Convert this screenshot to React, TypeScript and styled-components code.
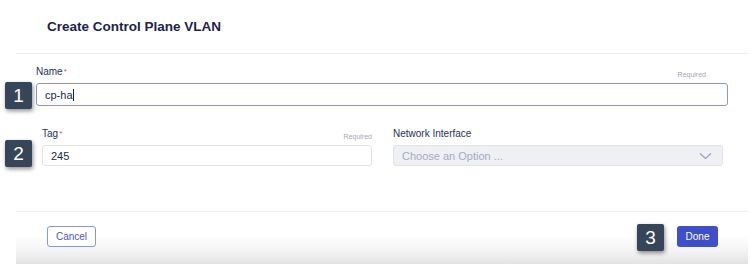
import styled, { createGlobalStyle } from "styled-components";

const GlobalStyle = createGlobalStyle`
  body {
    margin: 0;
    background: #ffffff;
    font-family: "Liberation Sans", Arial, sans-serif;
  }
`;

function App() {
  return (
    <>
      <GlobalStyle />
      <Page>
        <Modal>
          <Header>
            <Title>Create Control Plane VLAN</Title>
          </Header>
          <Body>
            <Field $padLeft={20} $padRight={20}>
              <LabelRow>
                <Label>
                  Name<Star>*</Star>
                </Label>
                <Hint $offset={22}>Required</Hint>
              </LabelRow>
              <Input $focused>
                cp-ha<Caret />
              </Input>
              <Badge $left={-11} $top={-2}>1</Badge>
            </Field>
            <Row>
              <Field>
                <LabelRow>
                  <Label>
                    Tag<Star>*</Star>
                  </Label>
                  <Hint>Required</Hint>
                </LabelRow>
                <Input>245</Input>
                <Badge $left={-37} $top={-6}>2</Badge>
              </Field>
              <Field>
                <LabelRow>
                  <Label>Network Interface</Label>
                </LabelRow>
                <Select>
                  <Placeholder>Choose an Option ...</Placeholder>
                  <svg width="13" height="8" viewBox="0 0 13 8" fill="none">
                    <path d="M1 1.5L6.5 6.5L12 1.5" stroke="#9a9eb4" strokeWidth="1.2" />
                  </svg>
                </Select>
              </Field>
            </Row>
          </Body>
          <Footer>
            <GhostButton>Cancel</GhostButton>
            <Actions>
              <Badge $static>3</Badge>
              <PrimaryButton>Done</PrimaryButton>
            </Actions>
          </Footer>
        </Modal>
      </Page>
    </>
  );
}

const Page = styled.div`
  width: 750px;
  height: 264px;
  overflow: hidden;
  padding-left: 16px;
  box-sizing: border-box;
`;

const Modal = styled.div`
  width: 732px;
  height: 264px;
  display: flex;
  flex-direction: column;
  background: #ffffff;
  border-bottom-right-radius: 6px;
`;

const Header = styled.div`
  height: 53px;
  display: flex;
  align-items: center;
  padding-left: 31px;
  border-bottom: 1px solid #ececf4;
`;

const Title = styled.h1`
  margin: 0;
  font-size: 13.5px;
  font-weight: 700;
  color: #1b1f4f;
`;

const Body = styled.div`
  height: 157px;
  padding-top: 12px;
  box-sizing: border-box;
  display: flex;
  flex-direction: column;
  gap: 22px;
`;

const Row = styled.div`
  display: grid;
  grid-template-columns: 330px 330px;
  column-gap: 21px;
  padding-left: 26px;
`;

const Field = styled.div<{ $padLeft?: number; $padRight?: number }>`
  position: relative;
  display: flex;
  flex-direction: column;
  padding-left: ${(p) => p.$padLeft ?? 0}px;
  padding-right: ${(p) => p.$padRight ?? 0}px;
`;

const LabelRow = styled.div`
  height: 18px;
  display: flex;
  justify-content: space-between;
  align-items: flex-start;
  margin-bottom: -1px;
`;

const Label = styled.span`
  font-size: 10px;
  color: #2a2f5a;
  line-height: 12px;
`;

const Star = styled.span`
  color: #e0464c;
  font-size: 8px;
  vertical-align: top;
  margin-left: 1px;
`;

const Hint = styled.span<{ $offset?: number }>`
  font-size: 7px;
  line-height: 8px;
  color: #a3a7ba;
  margin-top: 5px;
  padding-right: ${(p) => p.$offset ?? 0}px;
`;

const Input = styled.div<{ $focused?: boolean }>`
  box-sizing: border-box;
  display: flex;
  align-items: center;
  padding-left: 8px;
  font-size: 11px;
  color: #1b1f4f;
  border: ${(p) => (p.$focused ? "1.5px solid #8c94e8" : "1px solid #e2e3eb")};
  border-radius: 3px;
  height: ${(p) => (p.$focused ? 23 : 21)}px;
`;

const Caret = styled.span`
  width: 1px;
  height: 12px;
  background: #1b1f4f;
`;

const Select = styled.div`
  height: 21px;
  box-sizing: border-box;
  display: flex;
  align-items: center;
  justify-content: space-between;
  padding: 0 10px 0 8px;
  background: #eef0f4;
  border: 1px solid #e2e3eb;
  border-radius: 3px;
`;

const Placeholder = styled.span`
  font-size: 11px;
  color: #a6aabf;
`;

const Footer = styled.div`
  flex: 1;
  display: flex;
  align-items: flex-start;
  justify-content: space-between;
  padding: 14px 30px 0 31px;
  border-top: 1px solid #ececf4;
  background: linear-gradient(to bottom, #ffffff 45%, #f4f4f4 75%, #e2e2e2 100%);
`;

const Actions = styled.div`
  display: flex;
  align-items: flex-start;
  gap: 13px;
  margin-top: -2px;
`;

const GhostButton = styled.button`
  width: 49px;
  height: 21px;
  padding: 0;
  font-family: inherit;
  font-size: 10px;
  color: #4b57c9;
  background: #ffffff;
  border: 1px solid #8c94e8;
  border-radius: 3px;
`;

const PrimaryButton = styled.button`
  width: 41px;
  height: 21px;
  margin-top: 2px;
  padding: 0;
  font-family: inherit;
  font-size: 10px;
  color: #ffffff;
  background: #3e4fc8;
  border: none;
  border-radius: 3px;
`;

const Badge = styled.div<{ $left?: number; $top?: number; $static?: boolean }>`
  position: ${(p) => (p.$static ? "static" : "absolute")};
  left: ${(p) => p.$left ?? 0}px;
  top: ${(p) => 18 + (p.$top ?? 0)}px;
  width: 27px;
  height: 27px;
  display: flex;
  align-items: center;
  justify-content: center;
  background: #37455a;
  color: #ffffff;
  font-size: 19px;
  border-radius: 2px;
  box-shadow: 1px 2px 4px rgba(0, 0, 0, 0.45);
`;

export default App;
